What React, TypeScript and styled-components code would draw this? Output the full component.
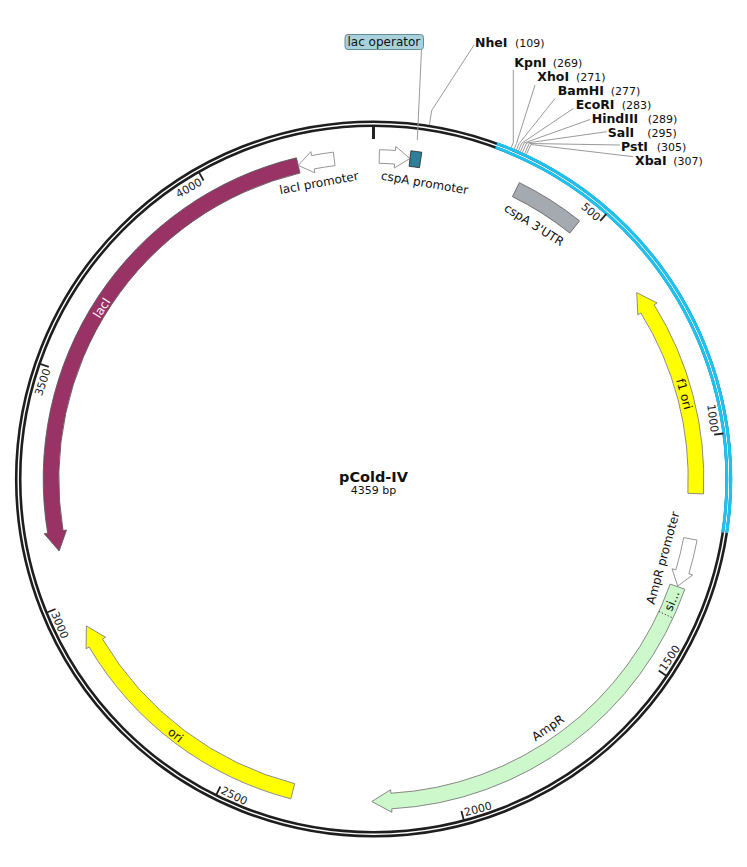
import React from 'react';
import styled, { createGlobalStyle } from 'styled-components';

const GlobalStyle = createGlobalStyle`
  html, body { margin: 0; padding: 0; background: #ffffff; }
  body { font-family: "DejaVu Sans", Verdana, sans-serif; }
`;

const Page = styled.div`
  width: 747px;
  height: 867px;
  overflow: hidden;
  background: #ffffff;
`;

const MapSvg = styled.svg`
  display: block;
  font-family: "DejaVu Sans", Verdana, sans-serif;
`;

const RingLine = styled.circle`
  fill: none;
  stroke: #1e1e1e;
  stroke-width: 2.6;
`;

const SelectionArc = styled.path`
  fill: none;
  stroke: #1cc3f2;
  stroke-width: 3;
`;

const Tick = styled.line<{ $origin?: boolean }>`
  stroke: #222222;
  stroke-width: ${(p) => (p.$origin ? 3 : 1.8)};
`;

const TickLabel = styled.text`
  font-size: 11px;
  fill: #222222;
`;

const FeatureShape = styled.path<{ $fill: string; $stroke?: string }>`
  fill: ${(p) => p.$fill};
  stroke: ${(p) => p.$stroke ?? '#707070'};
  stroke-width: 0.9;
  stroke-linejoin: miter;
`;

const DottedDivider = styled.line`
  stroke: #333333;
  stroke-width: 1;
  stroke-dasharray: 1.2 2;
`;

const FeatureLabel = styled.text<{ $light?: boolean }>`
  font-size: 12px;
  fill: ${(p) => (p.$light ? '#ffffff' : '#111111')};
`;

const Leader = styled.polyline`
  fill: none;
  stroke: #9a9a9a;
  stroke-width: 1;
`;

const SiteLabel = styled.text`
  fill: #111111;
`;

const SiteName = styled.tspan`
  font-weight: bold;
  font-size: 12.5px;
`;

const SiteNum = styled.tspan`
  font-size: 11px;
`;

const TagBox = styled.rect`
  fill: #a9d1db;
  stroke: #5f8f9b;
  stroke-width: 1;
`;

const TagText = styled.text`
  font-size: 12px;
  fill: #111111;
`;

const TitleText = styled.text`
  font-size: 14.5px;
  font-weight: bold;
  fill: #111111;
`;

const LengthText = styled.text`
  font-size: 11px;
  fill: #111111;
`;

const CX = 373.5;
const CY = 479;
const TOTAL = 4359;
const R_OUT = 357.3;
const R_IN = 353.3;
const BAND = 322.5;

type P = [number, number];
const rad = (d: number) => (d * Math.PI) / 180;
const pt = (r: number, a: number): P => [CX + r * Math.sin(rad(a)), CY - r * Math.cos(rad(a))];
const f = (p: P) => `${p[0].toFixed(2)} ${p[1].toFixed(2)}`;

type Arrow = 'cw' | 'ccw' | 'none';

function bandPath(
  a1: number,
  a2: number,
  arrow: Arrow,
  hw = 7.8,
  hhw = 11.3,
  hl = 19.5,
  R = BAND
): string {
  const ro = R + hw;
  const ri = R - hw;
  const hd = ((hl / R) * 180) / Math.PI;
  let s = a1;
  let e = a2;
  if (arrow === 'cw') e = a2 - hd;
  if (arrow === 'ccw') s = a1 + hd;
  const large = e - s > 180 ? 1 : 0;
  let d = `M ${f(pt(ro, s))} A ${ro} ${ro} 0 ${large} 1 ${f(pt(ro, e))}`;
  if (arrow === 'cw') {
    d += ` L ${f(pt(R + hhw, e))} L ${f(pt(R, a2))} L ${f(pt(R - hhw, e))} L ${f(pt(ri, e))}`;
  } else {
    d += ` L ${f(pt(ri, e))}`;
  }
  d += ` A ${ri} ${ri} 0 ${large} 0 ${f(pt(ri, s))}`;
  if (arrow === 'ccw') {
    d += ` L ${f(pt(R - hhw, s))} L ${f(pt(R, a1))} L ${f(pt(R + hhw, s))}`;
  }
  d += ' Z';
  return d;
}

function arcPath(r: number, a1: number, a2: number): string {
  const large = a2 - a1 > 180 ? 1 : 0;
  return `M ${f(pt(r, a1))} A ${r} ${r} 0 ${large} 1 ${f(pt(r, a2))}`;
}

const bpAngle = (bp: number) => (bp / TOTAL) * 360;

interface Feature {
  id: string;
  a1: number;
  a2: number;
  arrow: Arrow;
  fill: string;
  stroke?: string;
  hollow?: boolean;
}

const features: Feature[] = [
  { id: 'lacI', a1: 257.1, a2: 346.5, arrow: 'ccw', fill: '#993366', stroke: '#5a5a5a' },
  { id: 'lacIpro', a1: 346.5, a2: 353.0, arrow: 'ccw', fill: '#ffffff', stroke: '#8a8a8a', hollow: true },
  { id: 'cspApro', a1: 1.03, a2: 6.49, arrow: 'cw', fill: '#ffffff', stroke: '#8a8a8a', hollow: true },
  { id: 'lacO', a1: 6.5, a2: 8.4, arrow: 'none', fill: '#2e7f99', stroke: '#333333' },
  { id: 'utr', a1: 26.2, a2: 38.6, arrow: 'none', fill: '#a5a9b0', stroke: '#666666' },
  { id: 'f1', a1: 54.7, a2: 92.6, arrow: 'ccw', fill: '#ffff00', stroke: '#808080' },
  { id: 'amppro', a1: 100.7, a2: 109.4, arrow: 'cw', fill: '#ffffff', stroke: '#8a8a8a', hollow: true },
  { id: 'ampR', a1: 109.5, a2: 180.3, arrow: 'cw', fill: '#ccf8cc', stroke: '#7a7a7a' },
  { id: 'ori', a1: 194.5, a2: 242.9, arrow: 'cw', fill: '#ffff00', stroke: '#808080' },
];

interface LabelDef {
  text: string;
  x: number;
  y: number;
  rot: number;
  light?: boolean;
}

const siAngle = 112.2;
const siCenter = pt(BAND, siAngle);

const labels: LabelDef[] = [
  { text: 'lacI promoter', x: 319, y: 183, rot: -10.4 },
  { text: 'cspA promoter', x: 424.7, y: 183, rot: 9.8 },
  { text: "cspA 3'UTR", x: 534, y: 225, rot: 32.3 },
  { text: 'f1 ori', x: 684, y: 394, rot: 74.7 },
  { text: 'AmpR promoter', x: 663, y: 558, rot: -74.7 },
  { text: 'si...', x: siCenter[0], y: siCenter[1], rot: siAngle - 180 },
  { text: 'AmpR', x: 548, y: 728, rot: -35 },
  { text: 'ori', x: 175.5, y: 735, rot: 37.7 },
  { text: 'lacI', x: 102, y: 308, rot: -57.8, light: true },
];

interface Site {
  name: string;
  num: string;
  x: number;
  y: number;
  nx: number;
  end: P;
  elbow: P;
}

const sites: Site[] = [
  { name: 'NheI', num: '(109)', x: 475, y: 46.5, nx: 515, end: [474, 45], elbow: [431.7, 110.5] },
  { name: 'KpnI', num: '(269)', x: 514.3, y: 66.5, nx: 552.7, end: [513.3, 70], elbow: [513.3, 142.5] },
  { name: 'XhoI', num: '(271)', x: 537.3, y: 80.5, nx: 576, end: [535, 85], elbow: [516.5, 143.5] },
  { name: 'BamHI', num: '(277)', x: 557.7, y: 94.5, nx: 610.7, end: [555, 98.5], elbow: [519.2, 143.5] },
  { name: 'EcoRI', num: '(283)', x: 575.7, y: 108.5, nx: 621.7, end: [573.3, 108.5], elbow: [521.7, 143.3] },
  { name: 'HindIII', num: '(289)', x: 591.7, y: 122.5, nx: 647.7, end: [590, 119.5], elbow: [524.2, 143] },
  { name: 'SalI', num: '(295)', x: 607.7, y: 136.5, nx: 647.3, end: [606.7, 131.7], elbow: [526.7, 143] },
  { name: 'PstI', num: '(305)', x: 621, y: 150.5, nx: 656.7, end: [620, 145], elbow: [529.3, 143.5] },
  { name: 'XbaI', num: '(307)', x: 635, y: 164.5, nx: 673.3, end: [633.3, 156.7], elbow: [531, 144.5] },
];

function ringPoint(p: P, r: number): P {
  const dx = p[0] - CX;
  const dy = p[1] - CY;
  const d = Math.sqrt(dx * dx + dy * dy);
  return [CX + (dx / d) * r, CY + (dy / d) * r];
}

const tickValues = [500, 1000, 1500, 2000, 2500, 3000, 3500, 4000];

function TickMark({ value }: { value: number }) {
  const a = bpAngle(value);
  const bottom = a > 90 && a < 270;
  const p1 = pt(R_IN - 0.5, a);
  const p2 = pt(343.5, a);
  const gap = ((2.5 / 345) * 180) / Math.PI;
  const la = a - gap;
  const [x, y] = pt(bottom ? 349.5 : 340.5, la);
  const rot = bottom ? a - 180 : a;
  return (
    <g>
      <Tick x1={p1[0]} y1={p1[1]} x2={p2[0]} y2={p2[1]} />
      <TickLabel
        transform={`translate(${x.toFixed(2)} ${y.toFixed(2)}) rotate(${rot.toFixed(2)})`}
        textAnchor={bottom ? 'start' : 'end'}
      >
        {value}
      </TickLabel>
    </g>
  );
}

function FeatureBand({ feat }: { feat: Feature }) {
  const d = feat.hollow
    ? bandPath(feat.a1, feat.a2, feat.arrow, 6.8, 10.8, 15)
    : bandPath(feat.a1, feat.a2, feat.arrow);
  return <FeatureShape d={d} $fill={feat.fill} $stroke={feat.stroke} />;
}

export default function App() {
  const divA = 114.9;
  const dv1 = pt(BAND - 7.8, divA);
  const dv2 = pt(BAND + 7.8, divA);
  const t0a = pt(R_IN - 0.5, 0);
  const t0b = pt(340, 0);
  const selStart = 20.2;
  const selEnd = 98.7;

  return (
    <Page>
      <GlobalStyle />
      <MapSvg width={747} height={867} viewBox="0 0 747 867">
        <RingLine cx={CX} cy={CY} r={R_OUT} />
        <RingLine cx={CX} cy={CY} r={R_IN} />
        <SelectionArc d={arcPath(R_OUT, selStart, selEnd)} />
        <SelectionArc d={arcPath(R_IN, selStart, selEnd)} />

        <Tick $origin x1={t0a[0]} y1={t0a[1]} x2={t0b[0]} y2={t0b[1]} />

        {tickValues.map((v) => (
          <TickMark key={v} value={v} />
        ))}

        {features.map((ft) => (
          <FeatureBand key={ft.id} feat={ft} />
        ))}
        <DottedDivider x1={dv1[0]} y1={dv1[1]} x2={dv2[0]} y2={dv2[1]} />

        {labels.map((l) => (
          <FeatureLabel
            key={l.text}
            $light={l.light}
            transform={`translate(${l.x.toFixed(2)} ${l.y.toFixed(2)}) rotate(${l.rot.toFixed(2)})`}
            textAnchor="middle"
            dominantBaseline="central"
          >
            {l.text}
          </FeatureLabel>
        ))}

        <Leader points="421.5,49.5 417.3,140" />
        <TagBox x={345} y={34.5} width={78.5} height={15} rx={3} ry={3} />
        <TagText x={347.5} y={46.3}>
          lac operator
        </TagText>

        {sites.map((s) => {
          const stub = ringPoint(s.elbow, R_OUT + 1.2);
          return (
            <g key={s.name}>
              <Leader
                points={`${s.end[0]},${s.end[1]} ${s.elbow[0]},${s.elbow[1]} ${stub[0].toFixed(2)},${stub[1].toFixed(2)}`}
              />
              <SiteLabel y={s.y}>
                <SiteName x={s.x}>{s.name}</SiteName>
                <SiteNum x={s.nx}>{s.num}</SiteNum>
              </SiteLabel>
            </g>
          );
        })}

        <TitleText x={CX} y={481.5} textAnchor="middle">
          pCold-IV
        </TitleText>
        <LengthText x={CX} y={494} textAnchor="middle">
          4359 bp
        </LengthText>
      </MapSvg>
    </Page>
  );
}
